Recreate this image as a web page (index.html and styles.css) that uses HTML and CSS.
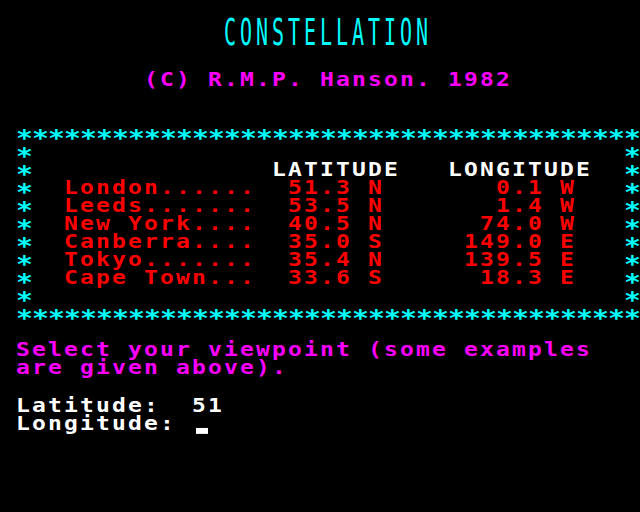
FILE: index.html
```html
<!DOCTYPE html>
<html>
<head>
<meta charset="utf-8">
<link rel="stylesheet" href="styles.css">
</head>
<body>
<div class="screen">
  <div class="title-block"><div class="title">CONSTELLATION</div></div>
  <div class="line mag">         (C) R.M.P. Hanson. 1982</div>
  <div class="line"></div>
  <div class="line"></div>
  <div class="line"> <span class="a">***************************************</span></div>
  <div class="line"> <span class="a">*</span>                                     <span class="a">*</span></div>
  <div class="line white"> <span class="a">*</span>               LATITUDE   LONGITUDE  <span class="a">*</span></div>
  <div class="line red"> <span class="a">*</span>  London......  51.3 N       0.1 W   <span class="a">*</span></div>
  <div class="line red"> <span class="a">*</span>  Leeds.......  53.5 N       1.4 W   <span class="a">*</span></div>
  <div class="line red"> <span class="a">*</span>  New York....  40.5 N      74.0 W   <span class="a">*</span></div>
  <div class="line red"> <span class="a">*</span>  Canberra....  35.0 S     149.0 E   <span class="a">*</span></div>
  <div class="line red"> <span class="a">*</span>  Tokyo.......  35.4 N     139.5 E   <span class="a">*</span></div>
  <div class="line red"> <span class="a">*</span>  Cape Town...  33.6 S      18.3 E   <span class="a">*</span></div>
  <div class="line"> <span class="a">*</span>                                     <span class="a">*</span></div>
  <div class="line"> <span class="a">***************************************</span></div>
  <div class="line"></div>
  <div class="line mag"> Select your viewpoint (some examples</div>
  <div class="line mag"> are given above).</div>
  <div class="line gap"></div>
  <div class="line white"> Latitude:  51</div>
  <div class="line white"> Longitude: <span class="cursor"></span></div>
</div>
</body>
</html>
```
FILE: styles.css
```css
html, body {
  margin: 0;
  padding: 0;
  background: #000;
}
.screen {
  width: 640px;
  height: 512px;
  background: #000;
  overflow: hidden;
  font-family: "DejaVu Sans Mono", "Liberation Mono", monospace;
  font-weight: bold;
  font-size: 23px;
  letter-spacing: 2.153px;
}
.title-block {
  height: 70px;
  box-sizing: border-box;
  padding-top: 14px;
  padding-left: 224px;
}
.title {
  color: #00ffff;
  font-weight: normal;
  font-size: 20px;
  line-height: 20px;
  letter-spacing: 3.96px;
  white-space: pre;
  transform: scaleY(1.85);
  transform-origin: 0 0;
}
.line {
  height: 18px;
  line-height: 18px;
  white-space: pre;
  color: #fff;
  transform: translateY(1.2px) scaleY(0.85);
  transform-origin: 0 0;
}
.gap {
  height: 20px;
}
.mag { color: #ff00ff; }
.red { color: #ff0000; }
.white { color: #ffffff; }
.a {
  color: #00ffff;
  font-size: 28px;
  line-height: 0;
  letter-spacing: -0.857px;
  vertical-align: -7.25px;
}
.cursor {
  display: inline-block;
  width: 12px;
  height: 7px;
  margin-left: 4px;
  background: #fff;
  vertical-align: -5.1px;
}
```
